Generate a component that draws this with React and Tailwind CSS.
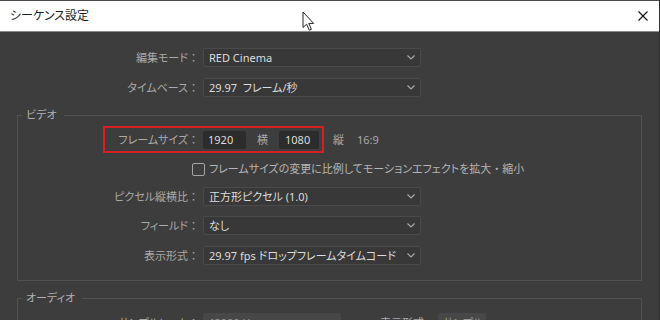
import React from 'react';

const font = "[font-family:'Noto_Sans','Noto_Sans_CJK_JP',sans-serif] [font-feature-settings:'palt']";

const Chevron = () => (
    <svg width="8" height="5" viewBox="0 0 8 5" className="shrink-0">
        <path d="M0.5 0.5 L4 4 L7.5 0.5" fill="none" stroke="#a8a8a8" strokeWidth="1.2" />
    </svg>
);

const Select = ({ value, className = 'w-[218px]' }) => (
    <div className={`flex h-[19px] items-center justify-between rounded-[2px] border border-[#4a4a4a] bg-[#383838] pl-[5px] pr-[5px] text-[#dcdcdc] ${className}`}>
        <span className="whitespace-pre">{value}</span>
        <Chevron />
    </div>
);

// label with a full-width colon kept at its full width
const Label = ({ text, className = '' }) => (
    <span className={`shrink-0 whitespace-nowrap text-right text-[#a9a9a9] ${className}`}>
        {text}
        <span className="[font-feature-settings:normal]">：</span>
    </span>
);

const Row = ({ label, labelW, className = '', children }) => (
    <div className={`flex items-center ${className}`}>
        <Label text={label} className={labelW} />
        <div className="ml-[4px]">{children}</div>
    </div>
);

const Group = ({ title, className = '', children }) => (
    <fieldset className={`mx-[17px] border border-[#515151] ${className}`}>
        <legend className="ml-[4px] px-[4px] pr-[7px] leading-[14px] text-[#b0b0b0]">{title}</legend>
        {children}
    </fieldset>
);

export default function App() {
    return (
        <div className={`relative h-[320px] w-[660px] overflow-hidden border-r border-[#2e2e2e] bg-[#3d3d3d] text-[11px] leading-[14px] ${font}`}>
            {/* Title bar */}
            <div className="box-border flex h-[32px] items-center justify-between border-t border-b border-t-[#4a4a4a] border-b-[#8c8c8c] bg-white pl-[10px] pr-[11px]">
                <span className="text-[12px] text-[#1e1e1e]">シーケンス設定</span>
                <svg width="10" height="10" viewBox="0 0 10 10">
                    <path d="M0.5 0.5 L9.5 9.5 M9.5 0.5 L0.5 9.5" stroke="#111" strokeWidth="1.1" />
                </svg>
            </div>

            {/* mouse pointer */}
            <svg className="absolute left-[302px] top-[11px]" width="14" height="21" viewBox="0 0 14 21">
                <path d="M1 1 L1 16.5 L4.6 13.2 L7.3 19.2 L9.4 18.3 L6.8 12.4 L11.6 12.4 Z" fill="#fff" stroke="#222" strokeWidth="1" strokeLinejoin="round" />
            </svg>

            <div className="flex flex-col">
                <Row className="mt-[16px]" labelW="w-[199px]" label="編集モード">
                    <Select value="RED Cinema" />
                </Row>
                <Row className="mt-[11px]" labelW="w-[199px]" label="タイムベース">
                    <Select value="29.97  フレーム/秒" />
                </Row>

                <Group title="ビデオ" className="mt-[11px] pb-[15px]">
                    <div className="ml-[85px] mt-[4px] flex items-center">
                        <div className="box-border flex h-[27px] w-[221px] items-center border-2 border-[#d42020] pr-[3px]">
                            <Label text="フレームサイズ" className="w-[94px]" />
                            <div className="ml-[4px] flex h-[18px] w-[43px] items-center rounded-[2px] bg-[#2c2c2c] pl-[5px] text-[#dcdcdc]">1920</div>
                            <span className="mx-[11px] text-[#a9a9a9]">横</span>
                            <div className="flex h-[18px] w-[40px] items-center rounded-[2px] bg-[#2c2c2c] pl-[6px] text-[#dcdcdc]">1080</div>
                        </div>
                        <span className="ml-[9px] text-[#a9a9a9]">縦</span>
                        <span className="ml-[13px] text-[#a9a9a9]">16:9</span>
                    </div>

                    <div className="ml-[174px] mt-[9px] flex items-center">
                        <span className="box-border h-[13px] w-[13px] rounded-[2px] border-[1.5px] border-[#a5a5a5]" />
                        <span className="ml-[4px] whitespace-nowrap text-[#b4b4b4]">
                            フレームサイズの変更に比例してモーションエフェクトを拡大<span className="[font-feature-settings:normal]">・</span>縮小
                        </span>
                    </div>

                    <Row className="mt-[11px]" labelW="w-[181px]" label="ピクセル縦横比">
                        <Select value="正方形ピクセル (1.0)" />
                    </Row>
                    <Row className="mt-[10px]" labelW="w-[181px]" label="フィールド">
                        <Select value="なし" />
                    </Row>
                    <Row className="mt-[11px]" labelW="w-[181px]" label="表示形式">
                        <Select value="29.97 fps ドロップフレームタイムコード" />
                    </Row>
                </Group>

                <Group title="オーディオ" className="mt-[10px] pb-[15px]">
                    <div className="mt-[8px] flex items-center">
                        <Label text="サンプルレート" className="w-[181px]" />
                        <div className="ml-[4px] flex h-[19px] w-[138px] items-center rounded-[2px] bg-[#474747] pl-[5px] text-[#9a9a9a]">48000 Hz</div>
                        <span className="ml-[39px] whitespace-nowrap text-[#a9a9a9]">表示形式</span>
                        <div className="ml-[14px] flex h-[19px] w-[48px] items-center rounded-[2px] bg-[#474747] pl-[5px] text-[#9a9a9a]">サンプル</div>
                    </div>
                </Group>
            </div>
        </div>
    );
}
